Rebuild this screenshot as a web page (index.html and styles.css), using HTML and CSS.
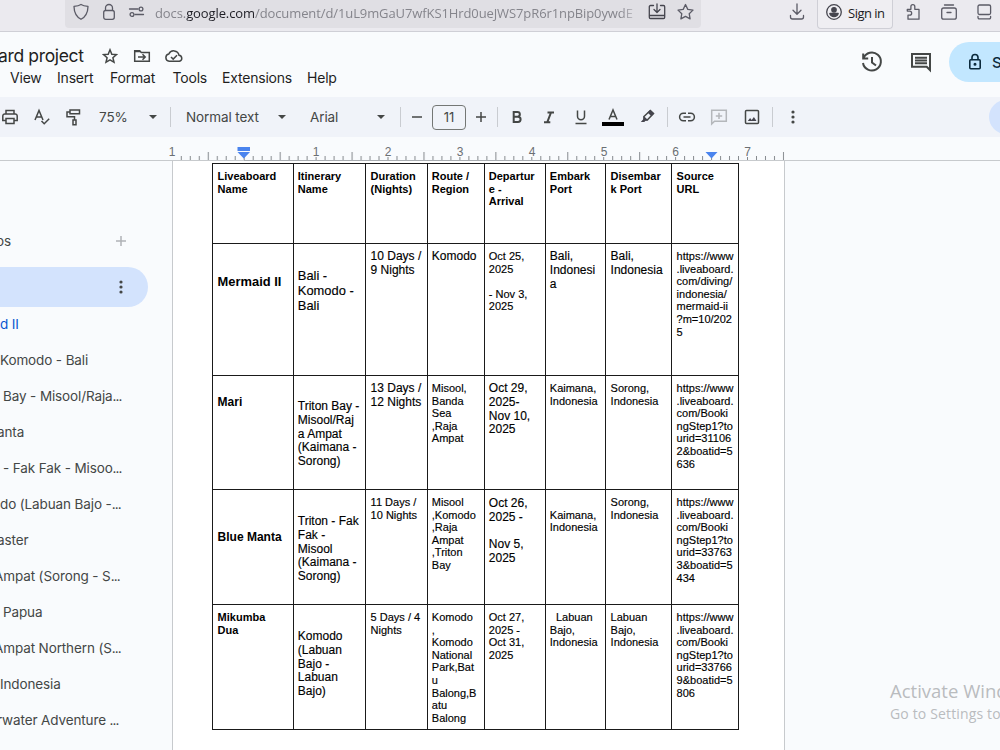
FILE: index.html
```html
<!DOCTYPE html>
<html lang="en">
<head>
<meta charset="utf-8">
<title>Liveaboard project</title>
<link rel="stylesheet" href="styles.css">
</head>
<body>
<div class="app">
  <header class="browser">
    <div class="urlbar">
      <svg class="ic" width="18" height="20" viewBox="0 0 18 20"><path d="M9 4.500C7 5.800 4.500 6.200 2 6.400C2.100 11.500 4 16.500 9 19.300C14 16.500 15.900 11.500 16 6.400C13.500 6.200 11 5.800 9 4.500Z"/></svg>
      <svg class="ic" width="16" height="20" viewBox="0 0 16 20"><rect x="2.700" y="10.500" width="10.600" height="8.800" rx="2"/><path d="M4.500 10.300V8a3.500 3.500 0 0 1 7 0v2.300"/></svg>
      <svg class="ic" width="18" height="20" viewBox="0 0 18 20"><path d="M1.500 9h8.500M7 14.500h8.500"/><circle cx="13" cy="9" r="1.900"/><circle cx="4" cy="14.500" r="1.900"/></svg>
      <div class="url">docs.<b>google.com</b>/document/d/1uL9mGaU7wfKS1Hrd0ueJWS7pR6r1npBip0ywdE</div>
      <svg class="ic dark" width="20" height="20" viewBox="0 0 20 20"><path d="M6.500 5.500h-3a1.200 1.200 0 0 0-1.200 1.200v10.600a1.200 1.200 0 0 0 1.200 1.200h13a1.200 1.200 0 0 0 1.200-1.200V6.700a1.200 1.200 0 0 0-1.200-1.200h-3M2.500 15.500h15M10 4v8M7 9.500l3 3 3-3"/></svg>
      <svg class="ic" width="20" height="20" viewBox="0 0 20 20"><path d="M9.500 4.500l2.300 4.900 5.200.7-3.800 3.600.9 5.200-4.600-2.500-4.600 2.500.9-5.200L2 10.100l5.200-.7z"/></svg>
    </div>
    <svg class="ic dl" width="18" height="20" viewBox="0 0 18 20"><path d="M9 4v10M5 10.300l4 4 4-4M2.500 15.500v1.500a2 2 0 0 0 2 2h9a2 2 0 0 0 2-2v-1.500"/></svg>
    <div class="signin">
      <svg class="ic dark" width="18" height="20" viewBox="0 0 18 20"><circle cx="9" cy="12" r="7.300"/><circle class="solid" cx="9" cy="9.800" r="2.200"/><path class="solid" d="M4.800 13.500h8.400c-.6 2-2.200 3-4.200 3s-3.600-1-4.200-3z"/></svg>
      <span>Sign in</span>
    </div>
    <svg class="ic" width="18" height="20" viewBox="0 0 18 20"><path d="M3 19.200v-4h1.600a2 2 0 0 0 0-4.100H2.300V9.300h3.600V6.600a1.900 1.900 0 0 1 3.900 0v2.700h4.200v9.900z"/></svg>
    <svg class="ic" width="20" height="20" viewBox="0 0 20 20"><path d="M4.500 5h9"/><rect x="1.700" y="8" width="14.600" height="11.200" rx="2"/><path d="M7 12.500h4"/></svg>
    <svg class="ic" width="18" height="20" viewBox="0 0 18 20"><rect x="2" y="5" width="12.600" height="9.500" rx="1.500"/><path d="M2 16.500v1a1.300 1.300 0 0 0 1.300 1.300h10a1.300 1.300 0 0 0 1.300-1.300v-1"/></svg>
  </header>

  <div class="dochead">
    <div class="headleft">
      <div class="titlerow">
        <span class="doctitle">ard project</span>
        <svg class="ic md" width="16" height="16" viewBox="0 0 16 16"><path d="M8 1.800l1.800 4.400 4.700.4-3.600 3.100 1.100 4.600L8 11.900l-4 2.400 1.100-4.600L1.500 6.600l4.700-.4z"/></svg>
        <svg class="ic md" width="18" height="16" viewBox="0 0 18 16"><path d="M1.700 13.300V2.700h5l1.600 1.700h8v8.900zM5 9h7M9.500 6.300L12.200 9l-2.700 2.700"/><path d="M1.700 3.500h5.500"/></svg>
        <svg class="ic md" width="20" height="16" viewBox="0 0 20 16"><path d="M5.200 13.300a3.700 3.700 0 0 1-.4-7.300A5.400 5.400 0 0 1 15 7.200a3.100 3.100 0 0 1 .4 6.100zM7 9l2.200 2.100 3.800-3.800"/></svg>
      </div>
      <nav class="menu"><span>View</span><span>Insert</span><span>Format</span><span>Tools</span><span>Extensions</span><span>Help</span></nav>
    </div>
    <svg class="ic big" width="24" height="24" viewBox="0 0 24 24"><path d="M3.200 3.500v5h5M3.500 8.200A9 9 0 1 1 3 13M12 7v5.500l4 3"/></svg>
    <svg class="ic big" width="24" height="24" viewBox="0 0 24 24"><path d="M3 4h18v16l-3.300-3.300H3z"/><path d="M6 7.700h12M6 10.500h12M6 13.300h12"/></svg>
    <div class="share">
      <svg class="ic navy" width="14" height="18" viewBox="0 0 14 18"><rect x="1.800" y="6.800" width="10.400" height="9" rx="1"/><path d="M4 6.500V4.500a3 3 0 0 1 6 0v2"/><circle class="solid" cx="7" cy="11.300" r=".7"/></svg>
      <span>Share</span>
    </div>
  </div>

  <div class="toolbar">
    <svg class="ic md" width="18" height="18" viewBox="0 0 18 18"><path d="M5 5.500V2.500h8v3M5 12.500H1.800V8A2 2 0 0 1 3.800 6h10.400a2 2 0 0 1 2 2v4.500H13"/><path d="M5 10.500h8v5H5z"/></svg>
    <svg class="ic md" width="18" height="18" viewBox="0 0 18 18"><path d="M2 12L6 2.500 10 12M3.500 9h5M8.500 13l2.700 2.700 5-5"/></svg>
    <svg class="ic md" width="18" height="18" viewBox="0 0 18 18"><path d="M5 2h9.500v3.800H5zM5 4H2v4.700h7.500V12M8 12h3v4.800H8z"/></svg>
    <span class="tt zoomval">75%</span>
    <i class="caret"></i>
    <i class="sep"></i>
    <span class="tt">Normal text</span>
    <i class="caret"></i>
    <span class="tt">Arial</span>
    <i class="caret"></i>
    <i class="sep"></i>
    <svg class="ic md" width="12" height="12" viewBox="0 0 12 12"><path d="M1 6h10"/></svg>
    <span class="size">11</span>
    <svg class="ic md" width="12" height="12" viewBox="0 0 12 12"><path d="M1 6h10M6 1v10"/></svg>
    <i class="sep"></i>
    <svg class="ic bold" width="12" height="14" viewBox="0 0 12 14"><path d="M2.700 2h3.800a2.300 2.300 0 0 1 0 4.700H2.700zM2.700 6.700h4.300a2.600 2.600 0 0 1 0 5.200H2.700z"/></svg>
    <svg class="ic bold" width="12" height="14" viewBox="0 0 12 14"><path d="M4.500 2.500H11M1 12.200h6.300M8 2.500L4.300 12.200"/></svg>
    <svg class="ic md" width="12" height="16" viewBox="0 0 12 16"><path d="M2.500 1.500v5.800a3.500 3.500 0 0 0 7 0V1.500M.5 14.500h11"/></svg>
    <svg class="ic md" width="22" height="18" viewBox="0 0 22 18"><path d="M7 11.500L11 2l4 9.500M8.500 8.500h5"/><path class="ink" d="M0 16h22"/></svg>
    <svg class="ic md" width="16" height="16" viewBox="0 0 16 16"><path d="M4 7.500L10.300 1.500l3.200 3L7.500 10.700H4z"/><path class="solid thin" d="M3.500 6.800l4.800 4.500-1.300.4-1.500 0-1.200 1.300H.8l2.700-3z"/><path class="solid thin" d="M7.500 3.500L10.300 1l3.700 3.400-2.600 2.800z"/></svg>
    <i class="sep"></i>
    <svg class="ic md" width="18" height="12" viewBox="0 0 18 12"><path d="M8 2.300H5.300a3.700 3.700 0 0 0 0 7.400H8M10 2.300h2.700a3.700 3.700 0 0 1 0 7.400H10M5.500 6h7"/></svg>
    <svg class="ic md pale" width="18" height="18" viewBox="0 0 18 18"><path d="M1.700 16V2.300h14.600v11H4.500zM9 4.700v6.400M5.800 7.900h6.400"/></svg>
    <svg class="ic md" width="16" height="16" viewBox="0 0 16 16"><rect x="1.500" y="1.500" width="13" height="13" rx="1"/><path class="solid thin" d="M3.800 12l2.300-3 1.600 1.900 2.200-2.900L12.500 12z"/></svg>
    <i class="sep"></i>
    <svg class="dots" width="4" height="16" viewBox="0 0 4 16"><circle cx="2" cy="3" r="1.600"/><circle cx="2" cy="8" r="1.600"/><circle cx="2" cy="13" r="1.600"/></svg>
    <i class="mode"></i>
  </div>

  <svg class="ruler" width="1000" height="24" viewBox="0 0 1000 24">
    <defs>
      <pattern id="ticks" x="171.800" y="0" width="71.900" height="24" patternUnits="userSpaceOnUse">
        <path d="M.5 20v3M9.500 19v4M18.500 19v4M27.500 19v4M36.500 15v8M45.500 19v4M54.400 19v4M63.400 19v4" stroke="#85898d" fill="none"/>
      </pattern>
    </defs>
    <rect x="180" y="0" width="604.500" height="23" fill="url(#ticks)"/>
    <g class="nums"><text x="172" y="18.500">1</text><text x="316" y="18.500">1</text><text x="388" y="18.500">2</text><text x="460" y="18.500">3</text><text x="532" y="18.500">4</text><text x="604" y="18.500">5</text><text x="675.500" y="18.500">6</text><text x="747.500" y="18.500">7</text></g>
    <path d="M0 23.500H1000" stroke="#c7cacd"/>
    <path d="M244 23.500H711" stroke="#a9adb1"/>
    <path d="M237.500 10h12.500v4h-12.500zM237.500 15h12.500l-6.200 6.500zM705.500 15h12l-6 6.500z" fill="#4a84ee"/>
  </svg>

  <div class="work">
    <aside class="side">
      <div class="tabs"><span>os</span><svg width="12" height="12" viewBox="0 0 12 12"><path d="M6 1v10M1 6h10" stroke="#b0b3b6" stroke-width="1.500"/></svg></div>
      <div class="pill"><svg class="dots" width="4" height="16" viewBox="0 0 4 16"><circle cx="2" cy="3" r="1.600"/><circle cx="2" cy="8" r="1.600"/><circle cx="2" cy="13" r="1.600"/></svg></div>
      <ul class="outline">
        <li class="current">d II</li>
        <li>Komodo - Bali</li>
        <li class="in">Bay - Misool/Raja<em>...</em></li>
        <li class="cut">anta</li>
        <li class="in">- Fak Fak - Misoo<em>...</em></li>
        <li>do (Labuan Bajo -<em>...</em></li>
        <li class="cut">aster</li>
        <li class="cut wide">Ampat (Sorong - S<em>...</em></li>
        <li class="in">Papua</li>
        <li class="cut wide">Ampat Northern (S<em>...</em></li>
        <li>Indonesia</li>
        <li class="cut">rwater Adventure <em>...</em></li>
      </ul>
    </aside>
    <main class="page">
      <div class="grid">
        <div class="c b">Liveaboard<br>Name</div><div class="c b n">Itinerary<br>Name</div><div class="c b">Duration<br>(Nights)</div><div class="c b n">Route /<br>Region</div><div class="c b n">Departur<br>e -<br>Arrival</div><div class="c b n">Embark<br>Port</div><div class="c b">Disembar<br>k Port</div><div class="c b">Source<br>URL</div>

        <div class="c b xl mermaid">Mermaid II</div><div class="c xl n bali">Bali -<br>Komodo -<br>Bali</div><div class="c l">10 Days /<br>9 Nights</div><div class="c l n">Komodo</div><div class="c n">Oct 25,<br>2025<br><br>- Nov 3,<br>2025</div><div class="c l n">Bali,<br>Indonesi<br>a</div><div class="c l">Bali,<br>Indonesia</div><div class="c">https://www<br>.liveaboard.<br>com/diving/<br>indonesia/<br>mermaid-ii<br>?m=10/202<br>5</div>

        <div class="c b l mari">Mari</div><div class="c l n triton">Triton Bay -<br>Misool/Raj<br>a Ampat<br>(Kaimana -<br>Sorong)</div><div class="c l">13 Days /<br>12 Nights</div><div class="c n">Misool,<br>Banda<br>Sea<br>,Raja<br>Ampat</div><div class="c l n">Oct 29,<br>2025-<br>Nov 10,<br>2025</div><div class="c n">Kaimana,<br>Indonesia</div><div class="c">Sorong,<br>Indonesia</div><div class="c">https://www<br>.liveaboard.<br>com/Booki<br>ngStep1?to<br>urid=31106<br>2&amp;boatid=5<br>636</div>

        <div class="c b l manta">Blue Manta</div><div class="c l n triton low">Triton - Fak<br>Fak -<br>Misool<br>(Kaimana -<br>Sorong)</div><div class="c">11 Days /<br>10 Nights</div><div class="c n">Misool<br>,Komodo<br>,Raja<br>Ampat<br>,Triton<br>Bay</div><div class="c l n oct">Oct 26,<br>2025 -<br><br>Nov 5,<br>2025</div><div class="c n"><br>Kaimana,<br>Indonesia</div><div class="c">Sorong,<br>Indonesia</div><div class="c">https://www<br>.liveaboard.<br>com/Booki<br>ngStep1?to<br>urid=33763<br>3&amp;boatid=5<br>434</div>

        <div class="c b">Mikumba<br>Dua</div><div class="c l n triton low">Komodo<br>(Labuan<br>Bajo -<br>Labuan<br>Bajo)</div><div class="c">5 Days / 4<br>Nights</div><div class="c n">Komodo<br>,<br>Komodo<br>National<br>Park,Bat<br>u<br>Balong,B<br>atu<br>Balong</div><div class="c n">Oct 27,<br>2025 -<br>Oct 31,<br>2025</div><div class="c n">&nbsp; Labuan<br>Bajo,<br>Indonesia</div><div class="c">Labuan<br>Bajo,<br>Indonesia</div><div class="c">https://www<br>.liveaboard.<br>com/Booki<br>ngStep1?to<br>urid=33766<br>9&amp;boatid=5<br>806</div>
      </div>
    </main>
    <div class="desk"></div>
  </div>
  <div class="watermark"><div class="w1">Activate Windows</div><div class="w2">Go to Settings to activate Windows.</div></div>
</div>
</body>
</html>
```
FILE: styles.css
```css
* { box-sizing: border-box; }
body { margin: 0; background: #f9fbfd; font-family: Inter, Roboto, sans-serif; }
.app { position: relative; width: 1000px; height: 750px; overflow: hidden; display: flex; flex-direction: column; }

.ic { display: block; fill: none; stroke: #5b5b66; stroke-width: 1.3; stroke-linejoin: round; stroke-linecap: round; }
.ic.dark { stroke: #45454e; }
.ic .solid { fill: #45454e; }
.ic.md { stroke: #444746; stroke-width: 1.5; stroke-linejoin: miter; stroke-linecap: butt; }
.ic.big { stroke: #444746; stroke-width: 2; stroke-linejoin: miter; stroke-linecap: butt; }
.ic.bold { stroke: #444746; stroke-width: 2; stroke-linejoin: miter; stroke-linecap: butt; }
.ic.pale { stroke: #b4b7bb; }
.ic.navy { stroke: #0b2a3c; stroke-width: 1.6; }
.ic .ink { stroke: #000; stroke-width: 4; }
.ic .thin { stroke: none; }
.dots { display: block; fill: #444746; }

/* browser chrome */
.browser { height: 32px; flex: none; background: #ebeaef; border-bottom: 1px solid #cfcfd6; display: grid; grid-template-columns: 65px 636px 87px 29px 88px 35px 36px auto; align-items: start; }
.browser > :first-child { grid-column: 2; }
.dl { grid-column: 4; }
.browser > .signin { grid-column: 5; }
.urlbar { height: 28px; background: #e0dfe4; border-radius: 0 0 4px 4px; display: grid; grid-template-columns: 29px 27px 27px 492px 29px auto; padding-left: 7px; align-items: start; }
.url { font: 13px/18px "Open Sans", "Noto Sans", sans-serif; letter-spacing: -.1px; color: #85858c; padding-top: 4px; white-space: nowrap; overflow: hidden; width: 486px; -webkit-mask-image: linear-gradient(90deg, #000 465px, transparent 486px); mask-image: linear-gradient(90deg, #000 465px, transparent 486px); }
.url b { font-weight: 400; color: #1f1f26; }
.signin { width: 76px; height: 29px; border: 1px solid #cfcfd6; border-top: 0; border-radius: 0 0 4px 4px; background: #efeef2; display: flex; gap: 5px; padding-left: 7px; }
.signin span { font: 13px/18px "Open Sans", "Noto Sans", sans-serif; letter-spacing: -.5px; color: #1c1c22; padding-top: 4px; white-space: nowrap; }

/* document header */
.dochead { height: 65px; flex: none; display: grid; grid-template-columns: 860px 49px 40px auto; padding-top: 10px; }
.dochead > .ic { margin-top: 8px; }
.titlerow { display: grid; grid-template-columns: 104px 31px 31px auto; align-items: center; height: 28px; margin-left: -2px; }
.doctitle { font-size: 17.500px; line-height: 24px; color: #1f1f1f; letter-spacing: -.35px; margin-top: -1px; }
.menu { display: grid; grid-template-columns: 47px 53px 62.5px 49.5px 85px auto; padding-left: 10px; font-size: 14px; line-height: 16px; color: #1f1f1f; letter-spacing: -.2px; }
.share { width: 120px; height: 40px; border-radius: 20px; background: #c2e7ff; display: flex; align-items: center; gap: 10px; padding-left: 19px; font-size: 15px; font-weight: 500; color: #0b2a3c; }

.toolbar { height: 40px; flex: none; background: #f0f3f9; display: grid; align-items: center;
  grid-template-columns: 32px 32px 33px 50px 22px 16px 91px 33px 66px 24px 11px 21px 43px 22px 14px 32px 32px 27px 38px 27px 11px 32px 34px 28px 19px 198px auto;
  padding-left: 1px; color: #444746; }
.tt { font-size: 13.500px; white-space: nowrap; letter-spacing: -.1px; }
.zoomval { padding-left: 1px; }
.caret { width: 8px; height: 4px; background: #444746; clip-path: polygon(0 0, 100% 0, 50% 100%); margin-left: 1px; }
.sep { width: 1px; height: 20px; background: #c9ccd1; }
.size { width: 34px; height: 25px; border: 1px solid #747775; border-radius: 4px; font-size: 13px; line-height: 23px; text-align: center; }
.mode { width: 70px; height: 34px; border-radius: 17px; background: #d3e3fd; }

.ruler { flex: none; display: block; }
.nums { font: 12px "Liberation Sans", Arial, sans-serif; fill: #6b6f73; text-anchor: middle; }

/* body */
.work { flex: 1; min-height: 0; display: grid; grid-template-columns: 172px 613px 1fr; }
.side { padding-top: 70px; font-size: 13.500px; letter-spacing: -.12px; color: #444746; }
.tabs { height: 20px; display: flex; align-items: center; justify-content: space-between; width: 127px; }
.tabs span { margin-left: -4px; }
.pill { margin-top: 16px; width: 148px; height: 40px; border-radius: 0 20px 20px 0; background: #d3e3fd; display: flex; align-items: center; padding-left: 119px; }
.outline { list-style: none; margin: 0; padding: 0; }
.outline li { height: 36px; line-height: 35px; white-space: nowrap; }
.outline em { font-style: normal; letter-spacing: -.9px; }
.outline .current { color: #0b57d0; }
.outline .in { padding-left: 3px; }
.outline .cut { margin-left: -3px; }
.outline .wide { margin-left: -6px; }
.page { background: #fff; border: 1px solid #c7cacd; border-width: 0 1px; padding: 2px 0 0 39px; }

.grid { width: 527px; border: 1px solid #1a1a1a; border-width: 1px 0 0 1px; display: grid; grid-template-columns: 81px 72px 62px 57px 61px 60px 66px 67px; grid-template-rows: 80px 132px 114px 115px 125px; }
.c { border: 1px solid #1a1a1a; border-width: 0 1px 1px 0; padding: 6px 0 0 4.600px; font: 11px/12.600px "Liberation Sans", Arial, sans-serif; color: #000; white-space: nowrap; -webkit-text-stroke: .15px #000; }
.c.n { padding-left: 3.800px; }
.c.l { font-size: 12px; line-height: 13.800px; }
.c.xl { font-size: 12.900px; line-height: 15px; }
.c.b { font-weight: 700; -webkit-text-stroke: 0; }
.c.mermaid { padding-top: 29.500px; }
.c.bali { padding-top: 24px; }
.c.mari { padding-top: 20px; }
.c.triton { padding-top: 24px; }
.c.triton.low { padding-top: 25px; }
.c.manta { padding-top: 41px; }
.c.oct { padding-top: 7px; }

.watermark { position: absolute; left: 890px; top: 678px; color: #b9bcbf; font-family: "Open Sans", "Noto Sans", sans-serif; white-space: nowrap; }
.w1 { font-size: 18.500px; line-height: 26px; }
.w2 { font-size: 14px; line-height: 19px; letter-spacing: .15px; }
```
